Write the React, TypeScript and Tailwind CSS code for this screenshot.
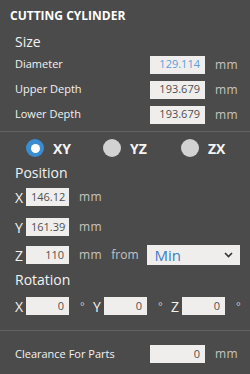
import React from "react";

function Row({ label, value, blue }: { label: string; value: string; blue?: boolean }) {
  return (
    <div className="flex h-[25px] items-center">
      <div className="w-[150px] pl-[15px] text-[11px] text-[#f2f2f2] whitespace-nowrap">{label}</div>
      <div className={`flex h-[18px] w-[55px] items-center justify-end bg-[#efeeed] pr-[5px] text-[11px] ${blue ? "text-[#5c9fd6]" : "text-[#505050]"}`}>
        {value}
      </div>
      <div className="pl-[10px] text-[12px] tracking-[0.5px] text-[#c4c4c4]">mm</div>
    </div>
  );
}

function Radio({ label, checked, w }: { label: string; checked?: boolean; w: string }) {
  return (
    <div className={`flex items-center ${w}`}>
      {checked ? (
        <div className="flex h-[18px] w-[18px] items-center justify-center rounded-full bg-[#3a8dd0]">
          <div className="h-[9px] w-[9px] rounded-full bg-white" />
        </div>
      ) : (
        <div className="h-[18px] w-[18px] rounded-full bg-[#d2d2d2]" />
      )}
      <div className="pl-[9px] text-[14px] font-bold text-[#f5f5f5]">{label}</div>
    </div>
  );
}

function SmallBox({ value, left }: { value: string; left?: boolean }) {
  return (
    <div className="flex h-[18px] w-[43px] items-center bg-[#efeeed] text-[11px] text-[#505050]">
      {left ? (
        <div className="ml-[5px] mr-[3px] overflow-hidden whitespace-nowrap">{value}</div>
      ) : (
        <div className="w-full pr-[5px] text-right">{value}</div>
      )}
    </div>
  );
}

function Axis({ a }: { a: string }) {
  return <div className="w-[11px] text-[14px] text-[#f2f2f2]">{a}</div>;
}

function RotGroup({ a, v }: { a: string; v: string }) {
  return (
    <div className="flex w-[78px] items-center">
      <Axis a={a} />
      <SmallBox value={v} />
      <div className="pl-[11px] text-[11px] text-[#c4c4c4]">°</div>
    </div>
  );
}

export default function App() {
  return (
    <div className="flex h-[374px] w-[250px] flex-col overflow-hidden bg-[#4b4b4b] font-['Open_Sans',sans-serif]">
      <div className="mt-[8px] h-[16px] pl-[10px] text-[12px] font-bold leading-[16px] text-white">CUTTING CYLINDER</div>
      <div className="mt-[8px] h-[20px] pl-[15px] text-[14px] leading-[20px] text-[#f2f2f2]">Size</div>
      <Row label="Diameter" value="129.114" blue />
      <Row label="Upper Depth" value="193.679" />
      <Row label="Lower Depth" value="193.679" />
      <div className="mt-[4px] h-px w-full bg-[#626262]" />
      <div className="mt-[7px] flex h-[18px] items-center pl-[26px]">
        <Radio label="XY" checked w="w-[77px]" />
        <Radio label="YZ" w="w-[78px]" />
        <Radio label="ZX" w="w-[60px]" />
      </div>
      <div className="mt-[6px] h-[20px] pl-[15px] text-[14px] leading-[20px] text-[#f2f2f2]">Position</div>
      <div className="mt-[4px] flex h-[20px] items-center pl-[15px]">
        <Axis a="X" />
        <SmallBox value="146.123" left />
        <div className="pl-[10px] text-[12px] tracking-[0.5px] text-[#c4c4c4]">mm</div>
      </div>
      <div className="mt-[10px] flex h-[20px] items-center pl-[15px]">
        <Axis a="Y" />
        <SmallBox value="161.399" left />
        <div className="pl-[10px] text-[12px] tracking-[0.5px] text-[#c4c4c4]">mm</div>
      </div>
      <div className="mt-[8px] flex h-[20px] items-center pl-[15px]">
        <Axis a="Z" />
        <SmallBox value="110" />
        <div className="pl-[10px] text-[12px] tracking-[0.5px] text-[#c4c4c4]">mm</div>
        <div className="pl-[9px] text-[12px] text-[#c4c4c4]">from</div>
        <div className="ml-[8px] flex h-[20px] w-[93px] items-center justify-between bg-[#efeeed] pl-[8px] pr-[7px]">
          <span className="text-[15px] text-[#3d7fc9]">Min</span>
          <svg width="9" height="6" viewBox="0 0 9 6">
            <path d="M1 1 L4.5 4.5 L8 1" fill="none" stroke="#333" strokeWidth="1.6" />
          </svg>
        </div>
      </div>
      <div className="mt-[5px] h-[20px] pl-[15px] text-[14px] leading-[20px] text-[#f2f2f2]">Rotation</div>
      <div className="mt-[6px] flex h-[20px] items-center pl-[15px]">
        <RotGroup a="X" v="0" />
        <RotGroup a="Y" v="0" />
        <RotGroup a="Z" v="0" />
      </div>
      <div className="mt-[14px] h-px w-full bg-[#626262]" />
      <div className="mt-[13px] flex h-[20px] items-center">
        <div className="w-[150px] pl-[15px] text-[11px] text-[#f2f2f2] whitespace-nowrap">Clearance For Parts</div>
        <div className="flex h-[18px] w-[55px] items-center justify-end bg-[#efeeed] pr-[5px] text-[11px] text-[#505050]">0</div>
        <div className="pl-[10px] text-[12px] tracking-[0.5px] text-[#c4c4c4]">mm</div>
      </div>
    </div>
  );
}
